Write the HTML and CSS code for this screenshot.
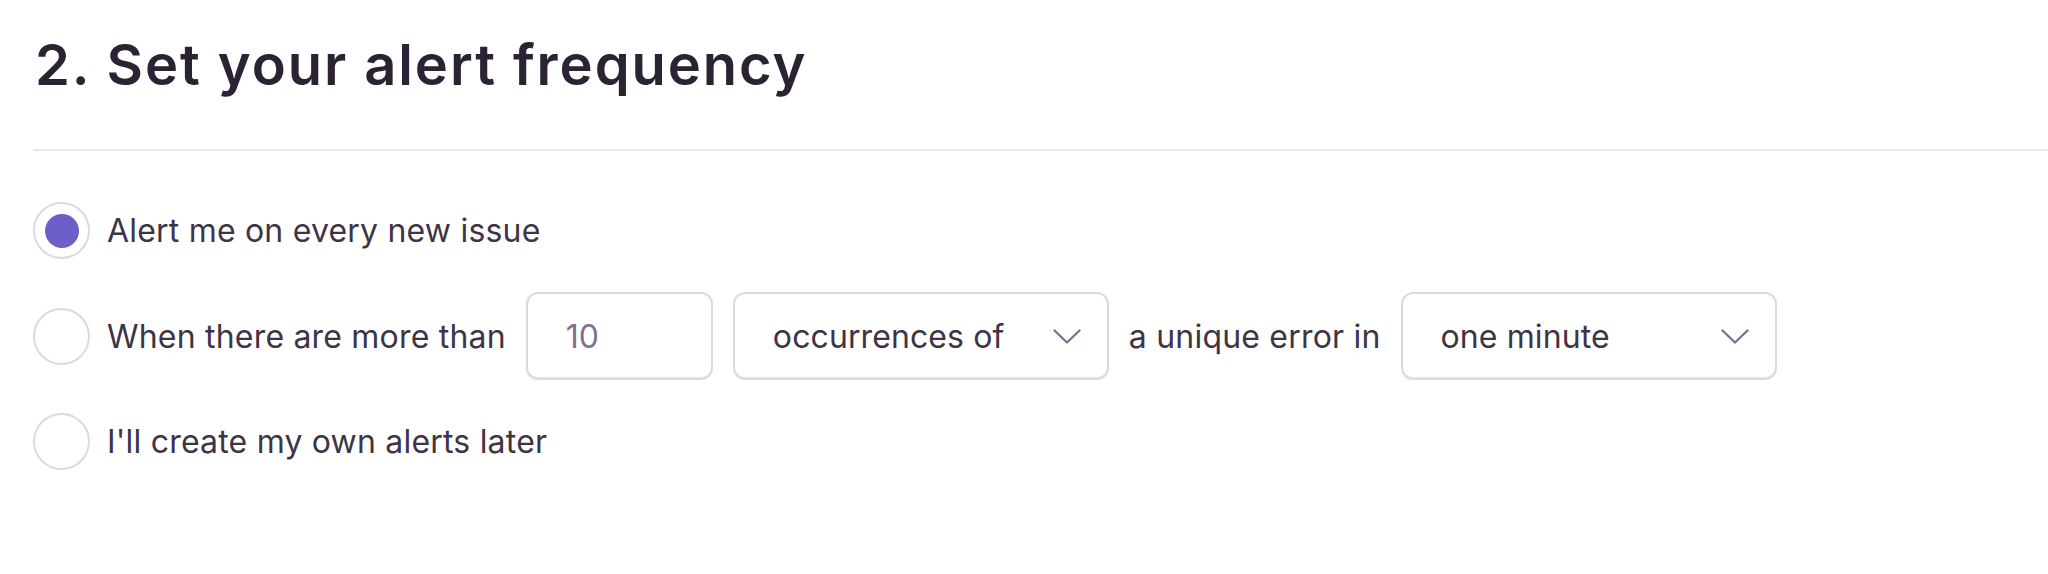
FILE: index.html
```html
<!DOCTYPE html>
<html lang="en">
<head>
<meta charset="utf-8">
<title>Set your alert frequency</title>
<link rel="stylesheet" href="styles.css">
</head>
<body>
<section class="panel">
  <h2 class="title">2. Set your alert frequency</h2>
  <div class="divider"></div>
  <div class="options">
    <label class="option">
      <span class="radio checked"><span class="dot"></span></span>
      <span class="label">Alert me on every new issue</span>
    </label>
    <label class="option">
      <span class="radio"></span>
      <span class="label">When there are more than</span>
      <span class="field num">10</span>
      <span class="field select">
        <span>occurrences of</span>
        <svg class="chev" width="28" height="15" viewBox="0 0 28 15"><polyline points="1.5,1.5 14,13.5 26.5,1.5" fill="none" stroke="#7f7190" stroke-width="2.4" stroke-linecap="round" stroke-linejoin="round"/></svg>
      </span>
      <span class="label">a unique error in</span>
      <span class="field select">
        <span>one minute</span>
        <svg class="chev" width="28" height="15" viewBox="0 0 28 15"><polyline points="1.5,1.5 14,13.5 26.5,1.5" fill="none" stroke="#7f7190" stroke-width="2.4" stroke-linecap="round" stroke-linejoin="round"/></svg>
      </span>
    </label>
    <label class="option">
      <span class="radio"></span>
      <span class="label">I'll create my own alerts later</span>
    </label>
  </div>
</section>
</body>
</html>
```

FILE: styles.css
```css
html, body {
  margin: 0;
  padding: 0;
  background: #ffffff;
}

body {
  font-family: Inter, "Noto Sans", "Liberation Sans", sans-serif;
  color: #3e3446;
}

.panel {
  padding: 31px 0 0 33px;
}

.title {
  margin: 0 0 50px 2px;
  font-size: 56px;
  font-weight: 600;
  line-height: normal;
  color: #2b2233;
  letter-spacing: 1.95px;
}

.divider {
  height: 2px;
  background: #e7e5ea;
}

.options {
  display: flex;
  flex-direction: column;
  gap: 33px;
  margin-top: 51px;
}

.option {
  display: flex;
  align-items: center;
  gap: 20px;
  font-size: 32px;
}

.radio {
  box-sizing: border-box;
  width: 57px;
  height: 57px;
  border: 2px solid #ddd8e3;
  border-radius: 50%;
  display: flex;
  align-items: center;
  justify-content: center;
  margin-right: -3px;
  flex: none;
}

.dot {
  width: 34px;
  height: 34px;
  border-radius: 50%;
  background: #6c5fc7;
}

.label {
  white-space: nowrap;
  letter-spacing: 0.2px;
}

.field {
  box-sizing: border-box;
  height: 88px;
  border: 2px solid #ddd8e3;
  border-radius: 12px;
  display: flex;
  align-items: center;
  padding: 0 26px 0 38px;
  white-space: nowrap;
  box-shadow: inset 0 -1px 0 #e6e2ea;
}

.num {
  width: 187px;
  color: #80708f;
}

.select {
  width: 376px;
  justify-content: space-between;
  color: #3e3446;
  letter-spacing: 0.1px;
}

.chev {
  display: block;
  flex: none;
}
```
